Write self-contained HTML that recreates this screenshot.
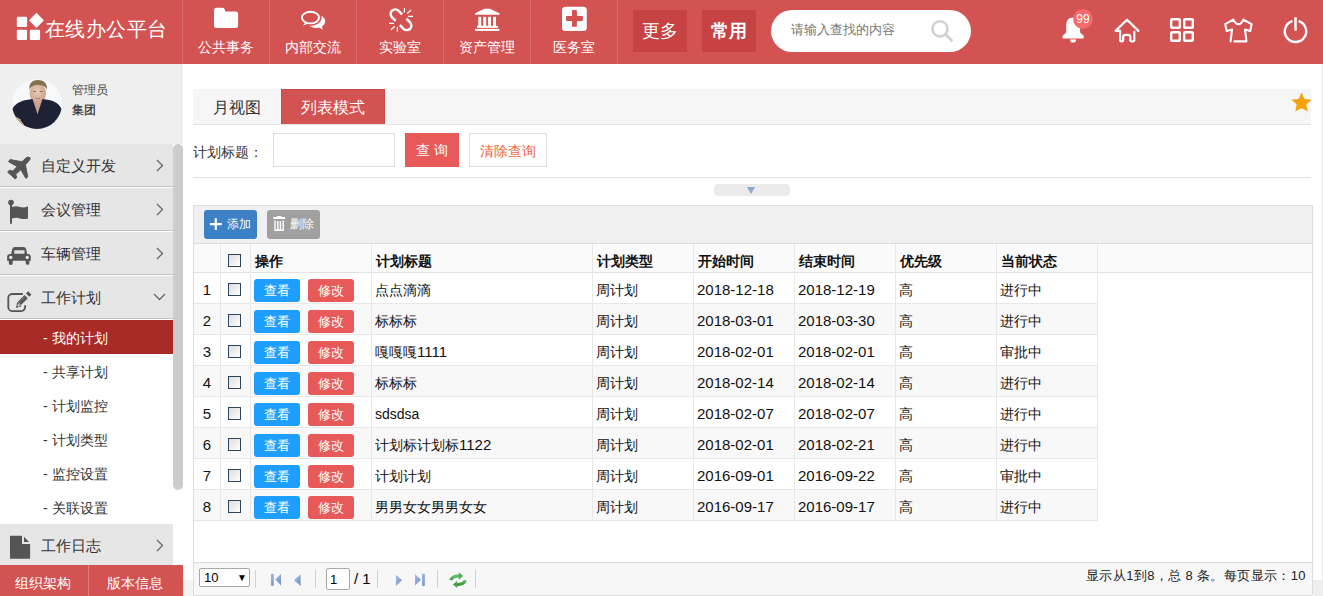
<!DOCTYPE html>
<html><head><meta charset="utf-8">
<style>
*{box-sizing:border-box;margin:0;padding:0}
html,body{width:1323px;height:596px;overflow:hidden;background:#fff;font-family:"Liberation Sans",sans-serif;color:#333}
.a{position:absolute}
.t{position:absolute;white-space:nowrap}
#hdr{left:0;top:0;width:1323px;height:64px;background:#d35252}
.lbh{top:37px;width:87px;text-align:center;font-size:14px;line-height:20px;color:#fff}
.nav{position:absolute;top:0;height:64px;width:87px;border-left:1px solid rgba(255,255,255,0.18)}
.nav .lb{position:absolute;left:0;width:86px;top:38px;line-height:20px;font-size:14px;color:#fff;text-align:center}
.nav svg{position:absolute}
.hb{position:absolute;top:10px;width:54px;height:42px;background:#c74242;color:#fff;font-size:18px;line-height:42px;text-align:center}
#side{left:0;top:64px;width:183px;height:532px;background:#efefef}
.mi{position:absolute;left:0;width:173px;height:44px;background:#e6e6e6;border-bottom:1px solid #fff;box-shadow:inset 0 -1px 0 #c4c4c4}
.mi .lb{position:absolute;left:41px;top:12px;line-height:20px;font-size:15px;color:#333}
.mi svg{position:absolute}
.sub{position:absolute;left:0;width:173px;height:34px;line-height:36px;font-size:14px;color:#333;padding-left:43px;background:#fff}
.chev{position:absolute}

/*GRIDCSS*/
.c{position:absolute;line-height:20px;font-size:14px;color:#111;white-space:nowrap}
.cb{position:absolute;width:13px;height:13px;border:1px solid #2c4560;background:linear-gradient(135deg,#ddd,#fff)}
.btn{position:absolute;width:46px;height:23px;border-radius:3px;color:#fff;font-size:13px;line-height:23px;text-align:center}
.h{position:absolute;top:251px;line-height:20px;font-size:14px;font-weight:bold;color:#111;white-space:nowrap}
/*ENDGRIDCSS*/
</style></head><body>
<!-- header -->
<div id="hdr" class="a">
  <svg class="a" style="left:0;top:0" width="1323" height="64" viewBox="0 0 1323 64">
    <!-- logo -->
    <g fill="#fff">
      <rect x="16.8" y="16.8" width="10.3" height="10.2" rx="1.2"/>
      <rect x="16.8" y="29.7" width="10.3" height="10.3" rx="1.2"/>
      <rect x="29.8" y="29.7" width="10.3" height="10.3" rx="1.2"/>
      <path d="M36.45 13.7 L43.1 20.35 L36.45 27 L29.8 20.35 Z" stroke="#fff" stroke-width="1.2" stroke-linejoin="round"/>
    </g>
    <!-- dividers -->
    <g fill="rgba(255,255,255,0.16)">
      <rect x="182" y="0" width="1" height="64"/><rect x="269" y="0" width="1" height="64"/><rect x="356" y="0" width="1" height="64"/>
      <rect x="443" y="0" width="1" height="64"/><rect x="530" y="0" width="1" height="64"/><rect x="617" y="0" width="1" height="64"/>
    </g>
    <!-- folder -->
    <path d="M216.5 7.8H222.3Q224.3 7.8 224.8 9.6L225.3 11.6H235.6A2.5 2.5 0 0 1 238.1 14.1V25.4A2.5 2.5 0 0 1 235.6 27.9H216.5A2.5 2.5 0 0 1 214 25.4V10.3A2.5 2.5 0 0 1 216.5 7.8Z" fill="#fff"/>
    <!-- chat -->
    <ellipse cx="316" cy="21.2" rx="9.2" ry="6.8" fill="#fff"/>
    <path d="M316 26 L322.8 29.6 L321.5 25 Z" fill="#fff"/>
    <ellipse cx="310.5" cy="17.6" rx="8.6" ry="5.8" fill="#d35252" stroke="#d35252" stroke-width="5"/>
    <path d="M305 22.5 L302.9 25.8 L309 23.8 Z" fill="#d35252" stroke="#d35252" stroke-width="2.5"/>
    <ellipse cx="310.5" cy="17.6" rx="8.6" ry="5.8" fill="none" stroke="#fff" stroke-width="1.9"/>
    <path d="M305.2 22.4 L302.9 25.8 L308.6 23.6" fill="#fff"/>
    <!-- link -->
    <g fill="none" stroke="#fff" stroke-width="2.5">
      <path d="M402.1 14.3L398.4 10.6A4.6 4.6 0 0 0 391.9 17.1L395.6 20.8"/>
      <path d="M399.9 25.2L403.6 28.9A4.6 4.6 0 0 0 410.1 22.4L406.4 18.7"/>
    </g>
    <g stroke="#fff" stroke-width="1.2">
      <path d="M404.4 8V12.6M407.2 13.6L411 10M407.9 16.3H413"/>
      <path d="M389 23.4H394M391 29.7L394.8 26.2M397.4 26.9V31.7"/>
    </g>
    <!-- bank -->
    <g fill="#fff">
      <path d="M484.5 8.8H489.7L499.5 13.3V14.8H475V13.3Z"/>
      <rect x="478.3" y="16.8" width="2.9" height="9.6"/><rect x="483.2" y="16.8" width="3" height="9.6"/>
      <rect x="488.1" y="16.8" width="2.9" height="9.6"/><rect x="493" y="16.8" width="3" height="9.6"/>
      <rect x="477" y="25.8" width="21" height="2.1"/>
      <rect x="475" y="28.9" width="24.5" height="2"/>
    </g>
    <!-- medical -->
    <rect x="562" y="6.8" width="24.8" height="24.1" rx="3.5" fill="#fff"/>
    <path d="M573 10H575.9A1 1 0 0 1 576.9 11V16.1H581.9A1 1 0 0 1 582.9 17.1V19.9A1 1 0 0 1 581.9 20.9H576.9V25.7A1 1 0 0 1 575.9 26.7H573A1 1 0 0 1 572 25.7V20.9H567A1 1 0 0 1 566 19.9V17.1A1 1 0 0 1 567 16.1H572V11A1 1 0 0 1 573 10Z" fill="#d35252"/>
    <!-- more/common boxes -->
    <rect x="633" y="10" width="54" height="42" fill="#c74242"/>
    <rect x="702" y="10" width="54" height="42" fill="#c74242"/>
    <!-- search -->
    <rect x="771" y="10" width="200" height="42" rx="21" fill="#fff"/>
    <circle cx="940" cy="28.8" r="7.6" fill="none" stroke="#d2d2d2" stroke-width="2.6"/>
    <path d="M945.6 34.4L951.5 40.3" stroke="#d2d2d2" stroke-width="3" stroke-linecap="round"/>
    <!-- bell -->
    <path d="M1073.1 17.6c-4.6 0-6.9 3.2-6.9 7.6v7.4l-3.6 3.1v2.7h21.1v-2.7l-3.6-3.1v-7.4c0-4.4-2.3-7.6-7-7.6z" fill="#fff"/>
    <path d="M1070.1 39.4h6a3 3.2 0 0 1-6 0z" fill="#fff"/>
    <circle cx="1083" cy="19" r="9.9" fill="#f56b6b"/>
    <!-- home -->
    <path d="M1138.4 30.9L1127 19.7L1115.6 30.9H1120.1V40.3A1 1 0 0 0 1121.1 41.3H1122.2A1 1 0 0 0 1123.2 40.3V36.9A2.4 2 0 0 1 1125.6 34.9H1127.9A2.4 2 0 0 1 1130.3 36.9V40.3A1 1 0 0 0 1131.3 41.3H1133.3A1 1 0 0 0 1134.3 40.3V31.8" fill="none" stroke="#fff" stroke-width="2.2" stroke-linejoin="round" stroke-linecap="round"/>
    <!-- grid -->
    <g fill="none" stroke="#fff" stroke-width="2.4">
      <rect x="1171.2" y="19.2" width="8.6" height="8.6" rx="0.8"/><rect x="1184.2" y="19.2" width="8.6" height="8.6" rx="0.8"/>
      <rect x="1171.2" y="32.2" width="8.6" height="8.6" rx="0.8"/><rect x="1184.2" y="32.2" width="8.6" height="8.6" rx="0.8"/>
    </g>
    <!-- shirt -->
    <path d="M1230.6 41.4L1232 29.6L1226.7 31L1225.2 24.2L1233.4 19.6Q1235.5 24.2 1238.4 24.2Q1241.3 24.2 1243.4 19.6L1251.6 24.2L1250.2 31L1245 29.6L1246.5 41.4H1234.4" fill="none" stroke="#fff" stroke-width="2.1" stroke-linejoin="round" stroke-linecap="round"/>
    <!-- power -->
    <path d="M1291.6 21.4A10.7 10.7 0 1 0 1299.4 21.4" fill="none" stroke="#fff" stroke-width="2.4" stroke-linecap="round"/>
    <path d="M1295.5 18.2V29.8" stroke="#fff" stroke-width="2.5" stroke-linecap="round"/>
  </svg>
  <div class="t" style="left:45px;top:15px;font-size:20px;line-height:28px;color:#fff;letter-spacing:0.4px">在线办公平台</div>
  <div class="t lbh" style="left:182px">公共事务</div>
  <div class="t lbh" style="left:269px">内部交流</div>
  <div class="t lbh" style="left:356px">实验室</div>
  <div class="t lbh" style="left:443px">资产管理</div>
  <div class="t lbh" style="left:530px">医务室</div>
  <div class="t" style="left:633px;top:21px;width:54px;text-align:center;font-size:18px;line-height:20px;color:#fff">更多</div>
  <div class="t" style="left:702px;top:21px;width:54px;text-align:center;font-size:18px;line-height:20px;color:#fff;font-weight:bold">常用</div>
  <div class="t" style="left:791px;top:20px;font-size:13px;line-height:20px;color:#777">请输入查找的内容</div>
  <div class="t" style="left:1073px;top:10px;width:20px;text-align:center;font-size:12px;line-height:18px;color:#fff">99</div>
</div>

<!-- sidebar -->
<div id="side" class="a">
  <svg class="a" style="left:12px;top:15px" width="50" height="50" viewBox="0 0 50 50">
    <defs><clipPath id="cp"><circle cx="25" cy="25" r="25"/></clipPath>
    <radialGradient id="fg" cx="0.45" cy="0.4" r="0.6"><stop offset="0" stop-color="#e8cbb8"/><stop offset="1" stop-color="#c9a18a"/></radialGradient></defs>
    <g clip-path="url(#cp)">
      <rect width="50" height="50" fill="#f8f9fb"/>
      <path d="M20 17H31V28L25.5 34L20 28Z" fill="#caa28c"/>
      <ellipse cx="25.8" cy="14.5" rx="8.2" ry="10.2" fill="url(#fg)"/>
      <path d="M17.4 11C16.8 4 20.5 1 26 1S35.6 4 35 11C34 7.5 31 6 26 6S18.6 7.5 17.4 11Z" fill="#85704f"/>
      <path d="M21 12.5h3M28 12.5h3" stroke="#8a6d5c" stroke-width="1"/>
      <path d="M23.5 19.5h4.5" stroke="#b57f72" stroke-width="1"/>
      <path d="M0 31C2 25.5 8 22 14 21L20.5 20L25.5 35L30.5 20L37 21C43 22 48 25.5 50 31V50H0Z" fill="#1d2234"/>
      <path d="M3.5 37.5L9 40.5L14 47L12.5 50H5L2.5 43Z" fill="#d2ad98"/>
      <path d="M46 38L47.5 44L43 50H36L41 45Z" fill="#d2ad98"/>
      <path d="M9 40.5L14 47" stroke="#141826" stroke-width="1.5"/>
    </g>
  </svg>
  <div class="t" style="left:72px;top:18px;font-size:12px;line-height:16px;color:#444">管理员</div>
  <div class="t" style="left:72px;top:38px;font-size:12px;line-height:16px;color:#333;-webkit-text-stroke:0.25px #333">集团</div>

  <div class="mi" style="top:80px">
    <div class="lb">自定义开发</div>
  </div>
  <div class="mi" style="top:124px">
    <div class="lb">会议管理</div>
  </div>
  <div class="mi" style="top:168px">
    <div class="lb">车辆管理</div>
  </div>
  <div class="mi" style="top:212px;height:44px">
    <div class="lb">工作计划</div>
  </div>
  <div class="sub" style="top:256px;background:#a82b26;color:#fff">- 我的计划</div>
  <div class="sub" style="top:290px">- 共享计划</div>
  <div class="sub" style="top:324px">- 计划监控</div>
  <div class="sub" style="top:358px">- 计划类型</div>
  <div class="sub" style="top:392px">- 监控设置</div>
  <div class="sub" style="top:426px">- 关联设置</div>
  <div class="mi" style="top:460px;border-bottom:none">
    <div class="lb">工作日志</div>
  </div>
<svg class="a" style="left:0;top:-64px" width="183" height="596" viewBox="0 0 183 596">
  <path d="M27.1 157.1L30 157.6L30 159.4L25.4 164.8L27.7 176.8L26 178.5L20.8 169.7L15.7 174.5L16.8 177.4L15.1 179.1L11.7 175.7L7.7 172.2L9.4 170.2L12.8 171.1L17.1 166.5L8.6 161.7L10 159.6L22 161.7Z" fill="#555" stroke="#555" stroke-width="1" stroke-linejoin="round"/>
  <circle cx="11" cy="202.6" r="2.8" fill="#555"/>
  <rect x="10" y="203" width="2" height="20.7" fill="#555"/>
  <path d="M12 207C15 206 17.5 206.2 20 207S25 207.6 28 206.3V218.4C25 219.5 22.5 219.2 20 218.4S15 217.6 12 218.6Z" fill="#555"/>
  <path d="M7.1 257Q7.1 254.3 10 254H11.1L12.3 249Q13 247.1 15 247.1H23.5Q25.5 247.1 26.1 249L27.2 254H28Q30.8 254.3 30.8 257V260.8H29.4V263A1.85 1.85 0 0 1 25.7 263V260.8H12.8V263A2 2 0 0 1 8.8 263V260.8H7.1Z" fill="#555"/>
  <rect x="14.3" y="250.3" width="10.2" height="3.4" fill="#e6e6e6"/>
  <circle cx="10.8" cy="257.4" r="1.7" fill="#e6e6e6"/><circle cx="27.2" cy="257.4" r="1.7" fill="#e6e6e6"/>
  <path d="M22.8 294H12A3.8 3.8 0 0 0 8.3 297.8V307.3A3.8 3.8 0 0 0 12 311.1H21.3A3.8 3.8 0 0 0 25.1 307.3V305.2" fill="none" stroke="#555" stroke-width="1.8"/>
  <path d="M19.4 303.4L26.2 296.6" stroke="#555" stroke-width="4.6"/>
  <path d="M27.6 295.2L29.8 293" stroke="#555" stroke-width="4.6"/>
  <path d="M15.9 308.1L17.3 301.9L21.6 306.2Z" fill="#555"/>
  <circle cx="18.6" cy="305.4" r="1.1" fill="#e6e6e6"/>
  <path d="M19.6 301.8L24.8 296.6" stroke="#999" stroke-width="0.7"/>
  <path d="M10 535.7H22V544H30.1V558.8H10Z" fill="#555"/>
  <path d="M24 536.8V542H29.1Z" fill="#555"/>
</svg>
  <!-- chevrons -->
  <svg class="a" style="left:156px;top:95px" width="8" height="13" viewBox="0 0 8 13"><path d="M1 1l5.5 5.5L1 12" fill="none" stroke="#666" stroke-width="1.3"/></svg>
  <svg class="a" style="left:156px;top:139px" width="8" height="13" viewBox="0 0 8 13"><path d="M1 1l5.5 5.5L1 12" fill="none" stroke="#666" stroke-width="1.3"/></svg>
  <svg class="a" style="left:156px;top:183px" width="8" height="13" viewBox="0 0 8 13"><path d="M1 1l5.5 5.5L1 12" fill="none" stroke="#666" stroke-width="1.3"/></svg>
  <svg class="a" style="left:153px;top:229px" width="13" height="8" viewBox="0 0 13 8"><path d="M1 1l5.5 5.5L12 1" fill="none" stroke="#666" stroke-width="1.3"/></svg>
  <svg class="a" style="left:156px;top:475px" width="8" height="13" viewBox="0 0 8 13"><path d="M1 1l5.5 5.5L1 12" fill="none" stroke="#666" stroke-width="1.3"/></svg>
  <!-- scrollbar -->
  <div class="a" style="left:173px;top:80px;width:10px;height:421px;background:#fff"></div>
  <div class="a" style="left:173px;top:80px;width:10px;height:346px;border-radius:5px;background:#cdcdcd"></div>
  <!-- bottom buttons -->
  <div class="a" style="left:0;top:501px;width:183px;height:31px;background:#d35252"></div>
  <div class="a" style="left:88px;top:501px;width:1px;height:31px;background:rgba(255,255,255,0.25)"></div>
  <div class="t" style="left:15px;top:510px;font-size:14px;line-height:18px;color:#fff">组织架构</div>
  <div class="t" style="left:107px;top:510px;font-size:14px;line-height:18px;color:#fff">版本信息</div>
</div>



<!-- content -->
<div class="a" style="left:193px;top:89px;width:1118px;height:36px;background:#f6f6f6;border-bottom:1px solid #e2e2e2"></div>
<div class="t" style="left:213px;top:98px;font-size:16px;line-height:20px;color:#333">月视图</div>
<div class="a" style="left:281px;top:89px;width:104px;height:35px;background:#d35252;border:1px solid #c94a4a;border-bottom:none"></div>
<div class="t" style="left:301px;top:98px;font-size:16px;line-height:20px;color:#fff">列表模式</div>
<svg class="a" style="left:1290.5px;top:91.5px" width="21" height="20" viewBox="0 0 21 20"><path d="M10.5 0.5l3 6.4 7 0.8-5.2 4.8 1.4 7-6.2-3.5-6.2 3.5 1.4-7L0.5 7.7l7-0.8z" fill="#f5a30c"/></svg>
<div class="t" style="left:193px;top:142px;font-size:14px;line-height:20px;color:#333">计划标题：</div>
<div class="a" style="left:273px;top:133px;width:122px;height:34px;border:1px solid #ddd;background:#fff"></div>
<div class="a" style="left:405px;top:133px;width:54px;height:34px;background:#e85a5a;color:#fff;font-size:14px;line-height:34px;text-align:center">查 询</div>
<div class="a" style="left:469px;top:133px;width:78px;height:34px;border:1px solid #ddd;background:#fff;color:#f0643c;font-size:14px;line-height:34px;text-align:center">清除查询</div>
<div class="a" style="left:193px;top:177px;width:1118px;height:1px;background:#e2e2e2"></div>
<div class="a" style="left:714px;top:184px;width:76px;height:12px;border-radius:4px;background:#ebebeb"></div>
<svg class="a" style="left:747px;top:187px" width="8" height="7" viewBox="0 0 8 7"><path d="M0 0h8L4 7z" fill="#8aaad2"/></svg>
<div class="a" style="left:193px;top:205px;width:1120px;height:390px;border:1px solid #ddd;background:#fff"></div>
<div class="a" style="left:194px;top:206px;width:1118px;height:38px;background:#f0f0f0;border-bottom:1px solid #dcdcdc"></div>
<div class="a" style="left:204px;top:210px;width:53px;height:29px;border-radius:3px;background:#3c80c6"></div>
<svg class="a" style="left:0;top:0" width="330" height="243" viewBox="0 0 330 243"><path d="M209.8 224.2H221.8M215.8 218.3V230" stroke="#fff" stroke-width="2.2"/></svg>
<div class="t" style="left:227px;top:214px;font-size:12px;line-height:20px;color:#fff">添加</div>
<div class="a" style="left:267px;top:210px;width:53px;height:29px;border-radius:3px;background:#a0a0a0"></div>
<svg class="a" style="left:0;top:0" width="330" height="243" viewBox="0 0 330 243"><rect x="273.2" y="217" width="11.8" height="2" fill="#fff"/><rect x="276.8" y="216" width="4.6" height="1.5" fill="#fff"/><path d="M275 220.5V230.3H283.2V220.5M277.8 221V229.6M280.4 221V229.6" fill="none" stroke="#fff" stroke-width="1.4"/></svg>
<div class="t" style="left:290px;top:214px;font-size:12px;line-height:20px;color:#fff">删除</div>
<div class="a" style="left:194px;top:244px;width:1118px;height:29px;background:#fafafa;border-bottom:1px solid #e2e2e2"></div>
<div class="cb" style="left:228px;top:254px"></div>
<div class="h" style="left:255px">操作</div>
<div class="h" style="left:376px">计划标题</div>
<div class="h" style="left:597px">计划类型</div>
<div class="h" style="left:698px">开始时间</div>
<div class="h" style="left:799px">结束时间</div>
<div class="h" style="left:900px">优先级</div>
<div class="h" style="left:1001px">当前状态</div>
<div class="a" style="left:194px;top:273px;width:904px;height:31px;background:#fff;border-bottom:1px solid #e8e8e8"></div>
<div class="c" style="left:194px;top:280px;width:26px;text-align:center;font-size:15px">1</div>
<div class="cb" style="left:228px;top:283px"></div>
<div class="btn" style="left:254px;top:279px;background:#1e9fff">查看</div>
<div class="btn" style="left:308px;top:279px;background:#e85a5a">修改</div>
<div class="c" style="left:375px;top:280px">点点滴滴</div>
<div class="c" style="left:596px;top:280px">周计划</div>
<div class="c" style="left:697px;top:280px;font-size:15px">2018-12-18</div>
<div class="c" style="left:798px;top:280px;font-size:15px">2018-12-19</div>
<div class="c" style="left:899px;top:280px">高</div>
<div class="c" style="left:1000px;top:280px">进行中</div>
<div class="a" style="left:194px;top:304px;width:904px;height:31px;background:#f8f8f8;border-bottom:1px solid #e8e8e8"></div>
<div class="c" style="left:194px;top:311px;width:26px;text-align:center;font-size:15px">2</div>
<div class="cb" style="left:228px;top:314px"></div>
<div class="btn" style="left:254px;top:310px;background:#1e9fff">查看</div>
<div class="btn" style="left:308px;top:310px;background:#e85a5a">修改</div>
<div class="c" style="left:375px;top:311px">标标标</div>
<div class="c" style="left:596px;top:311px">周计划</div>
<div class="c" style="left:697px;top:311px;font-size:15px">2018-03-01</div>
<div class="c" style="left:798px;top:311px;font-size:15px">2018-03-30</div>
<div class="c" style="left:899px;top:311px">高</div>
<div class="c" style="left:1000px;top:311px">进行中</div>
<div class="a" style="left:194px;top:335px;width:904px;height:31px;background:#fff;border-bottom:1px solid #e8e8e8"></div>
<div class="c" style="left:194px;top:342px;width:26px;text-align:center;font-size:15px">3</div>
<div class="cb" style="left:228px;top:345px"></div>
<div class="btn" style="left:254px;top:341px;background:#1e9fff">查看</div>
<div class="btn" style="left:308px;top:341px;background:#e85a5a">修改</div>
<div class="c" style="left:375px;top:342px">嘎嘎嘎<span style="font-size:15px">1111</span></div>
<div class="c" style="left:596px;top:342px">周计划</div>
<div class="c" style="left:697px;top:342px;font-size:15px">2018-02-01</div>
<div class="c" style="left:798px;top:342px;font-size:15px">2018-02-01</div>
<div class="c" style="left:899px;top:342px">高</div>
<div class="c" style="left:1000px;top:342px">审批中</div>
<div class="a" style="left:194px;top:366px;width:904px;height:31px;background:#f8f8f8;border-bottom:1px solid #e8e8e8"></div>
<div class="c" style="left:194px;top:373px;width:26px;text-align:center;font-size:15px">4</div>
<div class="cb" style="left:228px;top:376px"></div>
<div class="btn" style="left:254px;top:372px;background:#1e9fff">查看</div>
<div class="btn" style="left:308px;top:372px;background:#e85a5a">修改</div>
<div class="c" style="left:375px;top:373px">标标标</div>
<div class="c" style="left:596px;top:373px">周计划</div>
<div class="c" style="left:697px;top:373px;font-size:15px">2018-02-14</div>
<div class="c" style="left:798px;top:373px;font-size:15px">2018-02-14</div>
<div class="c" style="left:899px;top:373px">高</div>
<div class="c" style="left:1000px;top:373px">进行中</div>
<div class="a" style="left:194px;top:397px;width:904px;height:31px;background:#fff;border-bottom:1px solid #e8e8e8"></div>
<div class="c" style="left:194px;top:404px;width:26px;text-align:center;font-size:15px">5</div>
<div class="cb" style="left:228px;top:407px"></div>
<div class="btn" style="left:254px;top:403px;background:#1e9fff">查看</div>
<div class="btn" style="left:308px;top:403px;background:#e85a5a">修改</div>
<div class="c" style="left:375px;top:404px">sdsdsa</div>
<div class="c" style="left:596px;top:404px">周计划</div>
<div class="c" style="left:697px;top:404px;font-size:15px">2018-02-07</div>
<div class="c" style="left:798px;top:404px;font-size:15px">2018-02-07</div>
<div class="c" style="left:899px;top:404px">高</div>
<div class="c" style="left:1000px;top:404px">进行中</div>
<div class="a" style="left:194px;top:428px;width:904px;height:31px;background:#f8f8f8;border-bottom:1px solid #e8e8e8"></div>
<div class="c" style="left:194px;top:435px;width:26px;text-align:center;font-size:15px">6</div>
<div class="cb" style="left:228px;top:438px"></div>
<div class="btn" style="left:254px;top:434px;background:#1e9fff">查看</div>
<div class="btn" style="left:308px;top:434px;background:#e85a5a">修改</div>
<div class="c" style="left:375px;top:435px">计划标计划标<span style="font-size:15px">1122</span></div>
<div class="c" style="left:596px;top:435px">周计划</div>
<div class="c" style="left:697px;top:435px;font-size:15px">2018-02-01</div>
<div class="c" style="left:798px;top:435px;font-size:15px">2018-02-21</div>
<div class="c" style="left:899px;top:435px">高</div>
<div class="c" style="left:1000px;top:435px">进行中</div>
<div class="a" style="left:194px;top:459px;width:904px;height:31px;background:#fff;border-bottom:1px solid #e8e8e8"></div>
<div class="c" style="left:194px;top:466px;width:26px;text-align:center;font-size:15px">7</div>
<div class="cb" style="left:228px;top:469px"></div>
<div class="btn" style="left:254px;top:465px;background:#1e9fff">查看</div>
<div class="btn" style="left:308px;top:465px;background:#e85a5a">修改</div>
<div class="c" style="left:375px;top:466px">计划计划</div>
<div class="c" style="left:596px;top:466px">周计划</div>
<div class="c" style="left:697px;top:466px;font-size:15px">2016-09-01</div>
<div class="c" style="left:798px;top:466px;font-size:15px">2016-09-22</div>
<div class="c" style="left:899px;top:466px">高</div>
<div class="c" style="left:1000px;top:466px">审批中</div>
<div class="a" style="left:194px;top:490px;width:904px;height:31px;background:#f8f8f8;border-bottom:1px solid #e8e8e8"></div>
<div class="c" style="left:194px;top:497px;width:26px;text-align:center;font-size:15px">8</div>
<div class="cb" style="left:228px;top:500px"></div>
<div class="btn" style="left:254px;top:496px;background:#1e9fff">查看</div>
<div class="btn" style="left:308px;top:496px;background:#e85a5a">修改</div>
<div class="c" style="left:375px;top:497px">男男女女男男女女</div>
<div class="c" style="left:596px;top:497px">周计划</div>
<div class="c" style="left:697px;top:497px;font-size:15px">2016-09-17</div>
<div class="c" style="left:798px;top:497px;font-size:15px">2016-09-17</div>
<div class="c" style="left:899px;top:497px">高</div>
<div class="c" style="left:1000px;top:497px">进行中</div>
<div class="a" style="left:220px;top:244px;width:1px;height:276px;background:#e8e8e8"></div>
<div class="a" style="left:250px;top:244px;width:1px;height:276px;background:#e8e8e8"></div>
<div class="a" style="left:371px;top:244px;width:1px;height:276px;background:#e8e8e8"></div>
<div class="a" style="left:592px;top:244px;width:1px;height:276px;background:#e8e8e8"></div>
<div class="a" style="left:693px;top:244px;width:1px;height:276px;background:#e8e8e8"></div>
<div class="a" style="left:794px;top:244px;width:1px;height:276px;background:#e8e8e8"></div>
<div class="a" style="left:895px;top:244px;width:1px;height:276px;background:#e8e8e8"></div>
<div class="a" style="left:996px;top:244px;width:1px;height:276px;background:#e8e8e8"></div>
<div class="a" style="left:1097px;top:244px;width:1px;height:276px;background:#e8e8e8"></div>
<div class="a" style="left:194px;top:562px;width:1118px;height:34px;background:#f7f7f7;border-top:1px solid #ddd;border-bottom:1px solid #ddd"></div>
<div class="a" style="left:1313px;top:580px;width:10px;height:16px;background:#efefef"></div>
<div class="a" style="left:183px;top:580px;width:10px;height:16px;background:#f3f3f3"></div>
<div class="a" style="left:1321px;top:64px;width:2px;height:516px;background:#f4f4f4"></div>
<div class="a" style="left:199px;top:568px;width:51px;height:19px;border-radius:2px;border:1px solid #a8a8a8;background:#fff;font-size:13px;line-height:18px;padding-left:4px;color:#000">10<span style="position:absolute;left:37px;top:0;font-size:10px">▼</span></div>
<div class="a" style="left:255px;top:570px;width:1px;height:18px;background:#d0d0d0"></div>
<div class="a" style="left:315px;top:570px;width:1px;height:18px;background:#d0d0d0"></div>
<div class="a" style="left:377px;top:570px;width:1px;height:18px;background:#d0d0d0"></div>
<div class="a" style="left:437px;top:570px;width:1px;height:18px;background:#d0d0d0"></div>
<div class="a" style="left:475px;top:570px;width:1px;height:18px;background:#d0d0d0"></div>
<svg class="a" style="left:0;top:0" width="480" height="596" viewBox="0 0 480 596">
<defs><linearGradient id="pg" x1="0" y1="0" x2="1" y2="1"><stop offset="0" stop-color="#a9bde0"/><stop offset="1" stop-color="#6f8fc8"/></linearGradient>
<linearGradient id="gg" x1="0" y1="0" x2="0" y2="1"><stop offset="0" stop-color="#6cc06c"/><stop offset="1" stop-color="#3c983c"/></linearGradient></defs>
<rect x="270.9" y="573.9" width="2.8" height="11.9" fill="url(#pg)"/>
<path d="M281 573.9V585.4L275.2 579.6Z" fill="url(#pg)"/>
<path d="M300.6 574.6V586L294 580.3Z" fill="url(#pg)"/>
<path d="M395.9 574.8V585.9L402 580.3Z" fill="url(#pg)"/>
<path d="M415 574.3V585.4L421 579.8Z" fill="url(#pg)"/>
<rect x="422" y="573.8" width="2.8" height="12.1" fill="url(#pg)"/>
<path d="M450.8 580.2Q452 575.8 459.5 575.8" fill="none" stroke="url(#gg)" stroke-width="3.2"/>
<path d="M458.8 572.2L463.2 576L458.8 579.8Z" fill="#54ad54"/>
<path d="M465.3 580.3Q464 584.6 456.5 584.6" fill="none" stroke="url(#gg)" stroke-width="3.2"/>
<path d="M457.2 580.8L452.8 584.4L457.2 588Z" fill="#4aa44a"/>
</svg>
<div class="a" style="left:326px;top:568px;width:24px;height:22px;border-radius:2px;border:1px solid #a8a8a8;background:#fff;font-size:13px;line-height:21px;padding-left:3px;color:#000">1</div>
<div class="t" style="left:354px;top:569px;font-size:15px;line-height:20px;color:#000">/ 1</div>
<div class="t" id="info" style="left:1086px;top:566px;font-size:13px;letter-spacing:0.38px;line-height:20px;color:#222">显示从1到8，总 8 条。每页显示：10</div>
</body></html>
